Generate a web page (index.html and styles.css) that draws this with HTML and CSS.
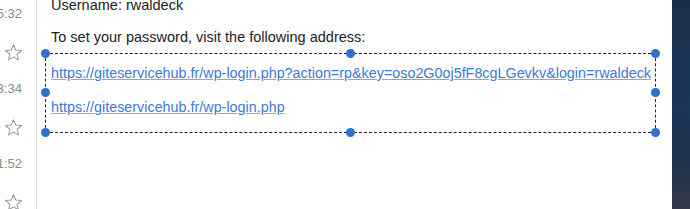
FILE: index.html
```html
<!DOCTYPE html>
<html>
<head>
<meta charset="utf-8">
<link rel="stylesheet" href="styles.css">
</head>
<body>
<div class="app">
  <aside class="list">
    <div class="entry"><div class="time">15:32</div><div class="star"><svg viewBox="0 0 20 20" width="19" height="19"><path d="M10 1.8l2.4 5.6 6 .5-4.6 4 1.4 5.9L10 14.6l-5.2 3.2 1.4-5.9-4.6-4 6-.5z" fill="none" stroke="#9a9a9a" stroke-width="1.1" stroke-linejoin="round"/></svg></div></div>
    <div class="entry"><div class="time">13:34</div><div class="star"><svg viewBox="0 0 20 20" width="19" height="19"><path d="M10 1.8l2.4 5.6 6 .5-4.6 4 1.4 5.9L10 14.6l-5.2 3.2 1.4-5.9-4.6-4 6-.5z" fill="none" stroke="#9a9a9a" stroke-width="1.1" stroke-linejoin="round"/></svg></div></div>
    <div class="entry"><div class="time">11:52</div><div class="star"><svg viewBox="0 0 20 20" width="19" height="19"><path d="M10 1.8l2.4 5.6 6 .5-4.6 4 1.4 5.9L10 14.6l-5.2 3.2 1.4-5.9-4.6-4 6-.5z" fill="none" stroke="#9a9a9a" stroke-width="1.1" stroke-linejoin="round"/></svg></div></div>
  </aside>
  <main class="mail">
    <p class="line first">Username: rwaldeck</p>
    <p class="line second">To set your password, visit the following address:</p>
    <div class="selection">
      <a class="link one" href="#">https://giteservicehub.fr/wp-login.php?action=rp&amp;key=oso2G0oj5fF8cgLGevkv&amp;login=rwaldeck</a>
      <a class="link two" href="#">https://giteservicehub.fr/wp-login.php</a>
      <span class="handle tl"></span><span class="handle tm"></span><span class="handle tr"></span>
      <span class="handle ml"></span><span class="handle mr"></span>
      <span class="handle bl"></span><span class="handle bm"></span><span class="handle br"></span>
    </div>
  </main>
  <div class="desktop"></div>
</div>
</body>
</html>
```
FILE: styles.css
```css
html, body {
  margin: 0;
  padding: 0;
  background: #fff;
}
.app {
  display: flex;
  width: 690px;
  height: 209px;
  overflow: hidden;
  font-family: "Liberation Sans", Arial, sans-serif;
}
.list {
  width: 36px;
  flex: none;
  border-right: 1px solid #e6e6e6;
  overflow: hidden;
  padding-top: 5px;
}
.entry {
  height: 75px;
}
.time {
  font-size: 13px;
  color: #8c8c8c;
  text-align: right;
  padding-right: 14px;
  line-height: 18px;
  white-space: nowrap;
  direction: rtl;
  width: 22px;
}
.star {
  margin-top: 20px;
  padding-left: 4px;
  height: 19px;
}
.star svg {
  display: block;
}
.mail {
  flex: 1;
  position: relative;
  padding-left: 8px;
}
.line {
  margin: 0;
  font-size: 14.5px;
  color: #222;
  padding-left: 6px;
  line-height: 18px;
}
.first {
  margin-top: -4px;
}
.second {
  margin-top: 14px;
}
.selection {
  position: relative;
  margin-top: 7px;
  width: 611px;
  height: 80px;
  border: 1px dashed #222;
  display: flex;
  flex-direction: column;
  padding-left: 5px;
  padding-top: 10px;
  box-sizing: border-box;
}
.link {
  font-size: 14.35px;
  color: #3a7bd9;
  text-decoration: underline;
  text-decoration-color: #7fa8e8;
  line-height: 18px;
  white-space: nowrap;
}
.two {
  margin-top: 16px;
}
.handle {
  position: absolute;
  width: 9px;
  height: 9px;
  border-radius: 50%;
  background: #2f6fd0;
}
.tl { left: -5px; top: -5px; }
.tm { left: 300px; top: -5px; }
.tr { right: -5px; top: -5px; }
.ml { left: -5px; top: 34px; }
.mr { right: -5px; top: 34px; }
.bl { left: -5px; bottom: -5px; }
.bm { left: 300px; bottom: -5px; }
.br { right: -5px; bottom: -5px; }
.desktop {
  width: 18px;
  flex: none;
  background: linear-gradient(180deg, #1b2f4a 0%, #1a3658 50%, #22334c 80%, #363848 100%);
}
```
